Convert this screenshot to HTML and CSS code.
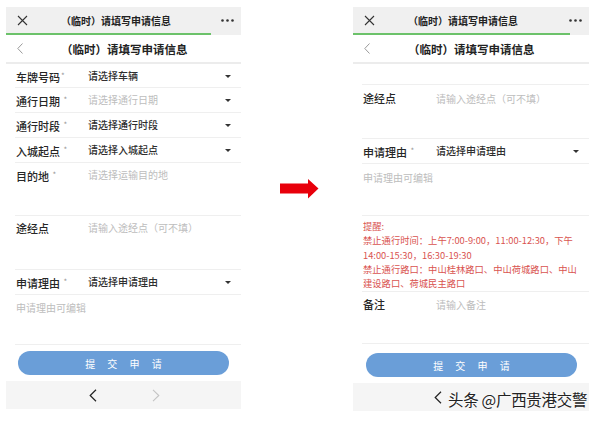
FILE: index.html
```html
<!DOCTYPE html>
<html lang="zh">
<head>
<meta charset="utf-8">
<title>（临时）请填写申请信息</title>
<link rel="stylesheet" href="styles.css">
</head>
<body>
<div class="page">
  <div class="phone phone-left">
    <div class="topbar">
      <div class="topbar-row">
        <span class="ic-close"><svg width="11" height="11" viewBox="0 0 11 11"><path d="M1 1L10 10M10 1L1 10" stroke="#333" stroke-width="1.1" fill="none"/></svg></span>
        <span class="topbar-title">（临时）请填写申请信息</span>
        <span class="ic-more"><svg width="13" height="3" viewBox="0 0 13 3"><circle cx="1.5" cy="1.5" r="1.3" fill="#333"/><circle cx="6.5" cy="1.5" r="1.3" fill="#333"/><circle cx="11.5" cy="1.5" r="1.3" fill="#333"/></svg></span>
      </div>
      <div class="progress"><div class="progress-fill" style="width:205px"></div></div>
    </div>
    <div class="header">
      <span class="ic-back"><svg width="6" height="11" viewBox="0 0 6 11"><path d="M5.5 0.5L0.8 5.5L5.5 10.5" stroke="#999" stroke-width="1" fill="none"/></svg></span>
      <span class="header-title">（临时）请填写申请信息</span>
    </div>
    <div class="form">
      <div class="row"><span class="label">车牌号码<i class="req">*</i></span><span class="value">请选择车辆</span><span class="caret"></span></div>
      <div class="row"><span class="label">通行日期 <i class="req">*</i></span><span class="value ph">请选择通行日期</span><span class="caret"></span></div>
      <div class="row"><span class="label">通行时段 <i class="req">*</i></span><span class="value">请选择通行时段</span><span class="caret"></span></div>
      <div class="row"><span class="label">入城起点 <i class="req">*</i></span><span class="value">请选择入城起点</span><span class="caret"></span></div>
      <div class="row row-tall"><span class="label">目的地 <i class="req">*</i></span><span class="value ph">请选择运输目的地</span></div>
      <div class="row row-tall2"><span class="label">途经点</span><span class="value ph">请输入途经点（可不填）</span></div>
      <div class="row"><span class="label">申请理由 <i class="req">*</i></span><span class="value">请选择申请理由</span><span class="caret"></span></div>
      <div class="row row-text"><span class="value ph">申请理由可编辑</span></div>
    </div>
    <div class="btn-wrap"><button class="submit" type="button">提 交 申 请</button></div>
    <div class="navbar">
      <span class="nav-prev"><svg width="8" height="13" viewBox="0 0 8 13"><path d="M7 0.8L1.2 6.5L7 12.2" stroke="#222" stroke-width="1.2" fill="none"/></svg></span>
      <span class="nav-next"><svg width="8" height="13" viewBox="0 0 8 13"><path d="M1 0.8L6.8 6.5L1 12.2" stroke="#c4c4c4" stroke-width="1.1" fill="none"/></svg></span>
    </div>
  </div>

  <div class="arrow-col">
    <svg width="39" height="20" viewBox="0 0 39 20"><polygon points="0,4.5 28,4.5 28,0 38.5,9.5 28,19.5 28,14.5 0,14.5" fill="#e8000b"/></svg>
  </div>

  <div class="phone phone-right">
    <div class="topbar">
      <div class="topbar-row">
        <span class="ic-close"><svg width="11" height="11" viewBox="0 0 11 11"><path d="M1 1L10 10M10 1L1 10" stroke="#333" stroke-width="1.1" fill="none"/></svg></span>
        <span class="topbar-title">（临时）请填写申请信息</span>
        <span class="ic-more"><svg width="13" height="3" viewBox="0 0 13 3"><circle cx="1.5" cy="1.5" r="1.3" fill="#333"/><circle cx="6.5" cy="1.5" r="1.3" fill="#333"/><circle cx="11.5" cy="1.5" r="1.3" fill="#333"/></svg></span>
      </div>
      <div class="progress"><div class="progress-fill" style="width:217px"></div></div>
    </div>
    <div class="header">
      <span class="ic-back"><svg width="6" height="11" viewBox="0 0 6 11"><path d="M5.5 0.5L0.8 5.5L5.5 10.5" stroke="#999" stroke-width="1" fill="none"/></svg></span>
      <span class="header-title">（临时）请填写申请信息</span>
    </div>
    <div class="form">
      <div class="row row-blank"></div>
      <div class="row row-tall2"><span class="label">途经点</span><span class="value ph">请输入途经点（可不填）</span></div>
      <div class="row"><span class="label">申请理由 <i class="req">*</i></span><span class="value">请选择申请理由</span><span class="caret"></span></div>
      <div class="row row-text2"><span class="value ph">申请理由可编辑</span></div>
      <div class="row row-notice">
        <p class="notice">提醒:<br>禁止通行时间：上午7:00-9:00，11:00-12:30，下午<br>14:00-15:30，16:30-19:30<br>禁止通行路口：中山桂林路口、中山荷城路口、中山<br>建设路口、荷城民主路口</p>
      </div>
      <div class="row row-remark"><span class="label">备注</span><span class="value ph">请输入备注</span></div>
    </div>
    <div class="btn-wrap btn-wrap-right"><button class="submit" type="button">提 交 申 请</button></div>
    <div class="navbar navbar-right">
      <span class="nav-prev"><svg width="8" height="13" viewBox="0 0 8 13"><path d="M7 0.8L1.2 6.5L7 12.2" stroke="#222" stroke-width="1.2" fill="none"/></svg></span>
      <span class="watermark">头条 @广西贵港交警</span>
    </div>
  </div>
</div>
</body>
</html>
```

FILE: styles.css
```css
* { box-sizing: border-box; }
html, body { margin: 0; padding: 0; background: #fff; }
body {
  font-family: "Noto Sans CJK SC", "Noto Sans", "Liberation Sans", sans-serif;
  color: #333;
  width: 600px;
  height: 421px;
  overflow: hidden;
}
.page {
  display: flex;
  align-items: flex-start;
  padding: 7px 0 0 6px;
}
.phone {
  display: flex;
  flex-direction: column;
  background: #fff;
}
.phone-left { width: 235px; }
.phone-right { width: 236px; position: relative; }

.arrow-col {
  width: 112px;
  padding: 172px 0 0 39px;
}
.arrow-col svg { display: block; }

/* top bar */
.topbar { background: #f0f0f0; }
.topbar-row {
  height: 26px;
  display: flex;
  align-items: center;
}
.ic-close {
  width: 32px;
  display: flex;
  justify-content: center;
  padding-top: 1px;
}
.ic-close svg, .ic-more svg, .ic-back svg, .nav-prev svg, .nav-next svg { display: block; }
.topbar-title {
  flex: 1;
  padding-left: 23px;
  font-size: 10px;
  font-weight: 700;
  color: #222;
  white-space: nowrap;
}
.ic-more {
  width: 28px;
  display: flex;
  justify-content: center;
}
.progress { height: 2px; }
.progress-fill { height: 2px; background: #6cc26a; }

/* header */
.header {
  height: 29px;
  display: flex;
  align-items: center;
  border-bottom: 2px solid #ececec;
}
.ic-back {
  width: 28px;
  display: flex;
  justify-content: center;
}
.header-title {
  margin-left: 27px;
  font-size: 11.5px;
  font-weight: 700;
  color: #222;
  white-space: nowrap;
}

/* form */
.form { display: flex; flex-direction: column; }
.row {
  margin-left: 9px;
  height: 25px;
  border-bottom: 1px solid #efefef;
  display: flex;
  align-items: flex-start;
  line-height: 24px;
}
.row:first-child { height: 24px; }
.label {
  width: 73px;
  padding-left: 1px;
  font-size: 11px;
  font-weight: 500;
  color: #262626;
  white-space: nowrap;
}
.phone-right .label { width: 74px; }
.req {
  font-style: normal;
  font-weight: 400;
  font-size: 8px;
  color: #999;
  vertical-align: 3px;
  margin-left: 1px;
}
.value {
  flex: 1;
  font-size: 10px;
  font-weight: 500;
  color: #2e2e2e;
  white-space: nowrap;
}
.value.ph { color: #bdbdbd; font-weight: 400; }
.caret {
  width: 0;
  height: 0;
  margin: 11px 10px 0 0;
  border-left: 3px solid transparent;
  border-right: 3px solid transparent;
  border-top: 3px solid #333;
}
.row-tall { height: 53px; }
.row-tall2 { height: 54px; }
.row-text { height: 50px; padding-left: 1px; }
.row-text .value, .row-text2 .value { line-height: 25px; }

.row-blank { height: 21px !important; }
.phone-right .row-tall2 .label,
.phone-right .row-tall2 .value { line-height: 27px; }
.row-text2 { height: 52px; padding-left: 1px; }
.row-text2 .value { line-height: 27px; }
.row-notice { height: 76px; line-height: normal; }
.notice {
  margin: 0;
  padding: 3px 0 0 1px;
  font-size: 9.3px;
  line-height: 14.3px;
  color: #d9534f;
  white-space: nowrap;
}
.row-remark { height: 52px; }
.row-remark .label, .row-remark .value { line-height: 25px; }

/* button */
.btn-wrap {
  padding: 6px 12px 6px 12px;
}
.btn-wrap-right { padding: 9px 12px 6px 13px; }
.submit {
  display: block;
  width: 100%;
  height: 24px;
  border: 0;
  border-radius: 12px;
  background: #6a9ed8;
  color: #fff;
  font-family: inherit;
  font-size: 10px;
  letter-spacing: 5px;
  padding: 0 0 0 5px;
}

/* bottom nav */
.navbar {
  height: 28px;
  background: #f5f5f5;
  display: flex;
  align-items: center;
  position: relative;
}
.nav-prev { margin-left: 83px; }
.nav-next { margin-left: 55px; }
.navbar-right .nav-prev { margin-left: 81px; }
.watermark {
  position: absolute;
  left: 95px;
  top: 7px;
  font-size: 15.5px;
  line-height: 18px;
  color: #222;
  white-space: nowrap;
  letter-spacing: -0.3px;
  text-shadow: 0 0 2px #fff, 0 0 2px #fff;
}
```
